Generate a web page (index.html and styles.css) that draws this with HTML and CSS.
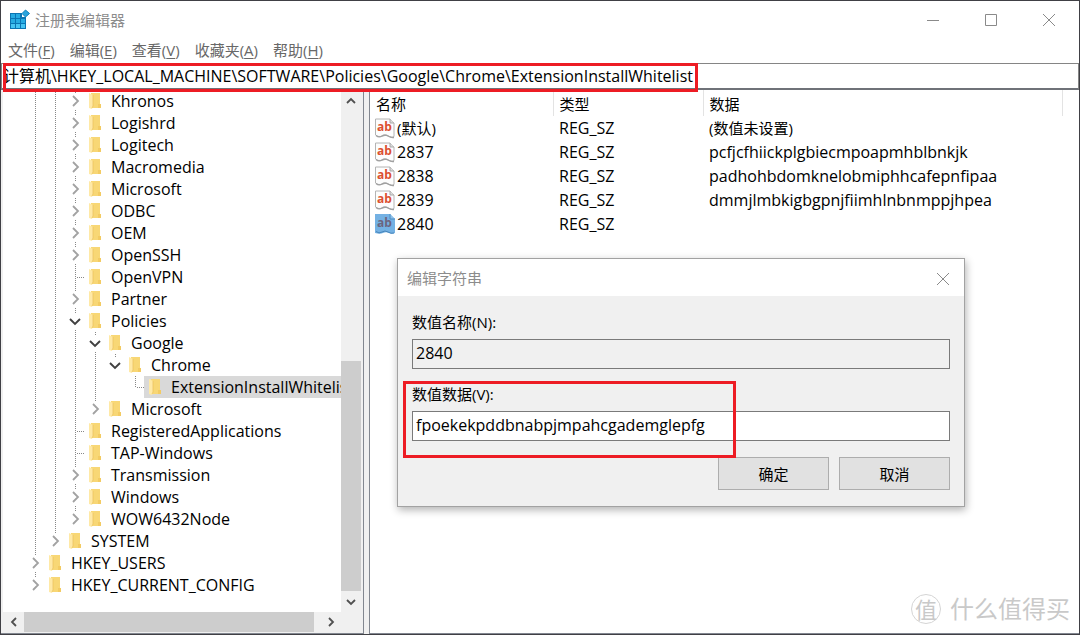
FILE: index.html
```
<!DOCTYPE html>
<html lang="zh-CN">
<head>
<meta charset="utf-8">
<title>注册表编辑器</title>
<link rel="stylesheet" href="styles.css">
</head>
<body>
<svg class="defs" aria-hidden="true">
  <symbol id="folder" viewBox="0 0 14 18">
    <path d="M3 1h9v12h1v3H3z" fill="#f8d775"/>
    <path d="M10 12h3v4h-3z" fill="#f3cb63"/>
    <path d="M1 1l4 2v11l-1 3-3-1z" fill="#ffe9a6"/>
    <path d="M5 3v11l-1 2" fill="none" stroke="#e9bf59" stroke-width=".7"/>
  </symbol>
  <symbol id="closed" viewBox="0 0 18 16"><path d="M7 3l5 5-5 5" fill="none" stroke="#a2a2a2" stroke-width="1.8"/></symbol>
  <symbol id="open" viewBox="0 0 18 16"><path d="M4 6l5 5 5-5" fill="none" stroke="#404040" stroke-width="1.9"/></symbol>
  <symbol id="leaf" viewBox="0 0 18 16"><path d="M11 8.500h8" fill="none" stroke="#888" stroke-dasharray="1 1"/></symbol>
  <symbol id="arrow" viewBox="0 0 10 10"><path d="M1 7l4-4 4 4" fill="none" stroke="#505050" stroke-width="1.800"/></symbol>
  <symbol id="string" viewBox="0 0 20 21">
    <path d="M.5 1h14.500l4 4v13.500q-2 1.500-4.500 0t-4.500-1-4.500 1T.5 17z" fill="#fdfdfd" stroke="#b4b4b4"/>
    <path d="M15 1v4h4" fill="#ddd" stroke="#a8a8a8"/>
    <path d="M1 17.500q3 2.500 6 .5t6 0q3 2 6 1.500" fill="none" stroke="#a0a0a0" stroke-width="1.300"/>
  </symbol>
</svg>
<div class="window">
  <header class="titlebar">
    <svg class="app-icon" width="22" height="22" viewBox="0 0 22 22">
      <path d="M1 4h12v4h4v12H1z" fill="#0b75b3"/>
      <path d="M2 5h4v4H2zM7 5h4v4H7zM2 10h4v4H2zM7 10h4v4H7zM12 10h4v4h-4z" fill="#27abe2"/>
      <path d="M2 15h4v4H2zM7 15h4v4H7zM12 15h4v4h-4z" fill="#45c4f2"/>
      <path d="M16.500 1l4 3.500-4 3.500-3.500-3.500z" fill="#2aa4dc" stroke="#0e80bd"/>
    </svg>
    <h1 class="title">注册表编辑器</h1>
    <div class="controls">
      <button class="control" aria-label="最小化"><svg width="14" height="14"><path d="M1 7.500h12"/></svg></button>
      <button class="control" aria-label="最大化"><svg width="14" height="14"><path d="M1.500 1.500h11v11h-11z"/></svg></button>
      <button class="control" aria-label="关闭"><svg width="14" height="14"><path d="M1 1l12 12M13 1L1 13"/></svg></button>
    </div>
  </header>
  <nav class="menu">
    <button>文件(<u>F</u>)</button><button>编辑(<u>E</u>)</button><button>查看(<u>V</u>)</button><button>收藏夹(<u>A</u>)</button><button>帮助(<u>H</u>)</button>
  </nav>
  <div class="address">
    <input class="address-input" aria-label="地址" value="计算机\HKEY_LOCAL_MACHINE\SOFTWARE\Policies\Google\Chrome\ExtensionInstallWhitelist">
    <div class="mark mark-address"></div>
  </div>
  <main class="main">
    <section class="tree-pane">
      <div class="tree-view">
        <ul class="tree root">
          <li><ul class="tree">
            <li><ul class="tree">
              <li><div class="row"><svg class="exp"><use href="#closed"/></svg><button class="key"><svg class="folder"><use href="#folder"/></svg>Khronos</button></div></li>
              <li><div class="row"><svg class="exp"><use href="#closed"/></svg><button class="key"><svg class="folder"><use href="#folder"/></svg>Logishrd</button></div></li>
              <li><div class="row"><svg class="exp"><use href="#closed"/></svg><button class="key"><svg class="folder"><use href="#folder"/></svg>Logitech</button></div></li>
              <li><div class="row"><svg class="exp"><use href="#closed"/></svg><button class="key"><svg class="folder"><use href="#folder"/></svg>Macromedia</button></div></li>
              <li><div class="row"><svg class="exp"><use href="#closed"/></svg><button class="key"><svg class="folder"><use href="#folder"/></svg>Microsoft</button></div></li>
              <li><div class="row"><svg class="exp"><use href="#closed"/></svg><button class="key"><svg class="folder"><use href="#folder"/></svg>ODBC</button></div></li>
              <li><div class="row"><svg class="exp"><use href="#closed"/></svg><button class="key"><svg class="folder"><use href="#folder"/></svg>OEM</button></div></li>
              <li><div class="row"><svg class="exp"><use href="#closed"/></svg><button class="key"><svg class="folder"><use href="#folder"/></svg>OpenSSH</button></div></li>
              <li><div class="row"><svg class="exp leaf"><use href="#leaf"/></svg><button class="key"><svg class="folder"><use href="#folder"/></svg>OpenVPN</button></div></li>
              <li><div class="row"><svg class="exp"><use href="#closed"/></svg><button class="key"><svg class="folder"><use href="#folder"/></svg>Partner</button></div></li>
              <li><div class="row"><svg class="exp"><use href="#open"/></svg><button class="key"><svg class="folder"><use href="#folder"/></svg>Policies</button></div>
                <ul class="tree">
                  <li><div class="row"><svg class="exp"><use href="#open"/></svg><button class="key"><svg class="folder"><use href="#folder"/></svg>Google</button></div>
                    <ul class="tree">
                      <li><div class="row"><svg class="exp"><use href="#open"/></svg><button class="key"><svg class="folder"><use href="#folder"/></svg>Chrome</button></div>
                        <ul class="tree">
                          <li><div class="row"><svg class="exp leaf"><use href="#leaf"/></svg><button class="key selected"><svg class="folder"><use href="#folder"/></svg>ExtensionInstallWhitelist</button></div></li>
                        </ul>
                      </li>
                    </ul>
                  </li>
                  <li><div class="row"><svg class="exp"><use href="#closed"/></svg><button class="key"><svg class="folder"><use href="#folder"/></svg>Microsoft</button></div></li>
                </ul>
              </li>
              <li><div class="row"><svg class="exp leaf"><use href="#leaf"/></svg><button class="key"><svg class="folder"><use href="#folder"/></svg>RegisteredApplications</button></div></li>
              <li><div class="row"><svg class="exp leaf"><use href="#leaf"/></svg><button class="key"><svg class="folder"><use href="#folder"/></svg>TAP-Windows</button></div></li>
              <li><div class="row"><svg class="exp"><use href="#closed"/></svg><button class="key"><svg class="folder"><use href="#folder"/></svg>Transmission</button></div></li>
              <li><div class="row"><svg class="exp"><use href="#closed"/></svg><button class="key"><svg class="folder"><use href="#folder"/></svg>Windows</button></div></li>
              <li><div class="row"><svg class="exp"><use href="#closed"/></svg><button class="key"><svg class="folder"><use href="#folder"/></svg>WOW6432Node</button></div></li>
            </ul></li>
            <li><div class="row"><svg class="exp"><use href="#closed"/></svg><button class="key"><svg class="folder"><use href="#folder"/></svg>SYSTEM</button></div></li>
          </ul></li>
          <li><div class="row"><svg class="exp"><use href="#closed"/></svg><button class="key"><svg class="folder"><use href="#folder"/></svg>HKEY_USERS</button></div></li>
          <li><div class="row"><svg class="exp"><use href="#closed"/></svg><button class="key"><svg class="folder"><use href="#folder"/></svg>HKEY_CURRENT_CONFIG</button></div></li>
        </ul>
      </div>
      <div class="scroll vertical">
        <button class="arrow" aria-label="向上"><svg><use href="#arrow"/></svg></button>
        <div class="track"><div class="thumb"></div></div>
        <button class="arrow down" aria-label="向下"><svg><use href="#arrow"/></svg></button>
      </div>
      <div class="scroll horizontal">
        <button class="arrow left" aria-label="向左"><svg><use href="#arrow"/></svg></button>
        <div class="track"><div class="thumb"></div></div>
        <button class="arrow right" aria-label="向右"><svg><use href="#arrow"/></svg></button>
      </div>
    </section>
    <section class="values">
      <table class="value-table">
        <colgroup><col class="col-name"><col class="col-type"><col class="col-data"><col></colgroup>
        <thead><tr><th>名称</th><th>类型</th><th>数据</th><td></td></tr></thead>
        <tbody>
          <tr><td class="local"><span class="name"><svg><use href="#string"/><text class="glyph" x="2" y="12.500">ab</text></svg>(默认)</span></td><td>REG_SZ</td><td class="local">(数值未设置)</td></tr>
          <tr><td><span class="name"><svg><use href="#string"/><text class="glyph" x="2" y="12.500">ab</text></svg>2837</span></td><td>REG_SZ</td><td>pcfjcfhiickplgbiecmpoapmhblbnkjk</td></tr>
          <tr><td><span class="name"><svg><use href="#string"/><text class="glyph" x="2" y="12.500">ab</text></svg>2838</span></td><td>REG_SZ</td><td>padhohbdomknelobmiphhcafepnfipaa</td></tr>
          <tr><td><span class="name"><svg><use href="#string"/><text class="glyph" x="2" y="12.500">ab</text></svg>2839</span></td><td>REG_SZ</td><td>dmmjlmbkigbgpnjfiimhlnbnmppjhpea</td></tr>
          <tr><td><span class="name"><svg viewBox="0 0 20 21"><path d="M0 0h15l5 5v14q-3 1.500-6 0t-6 0-8 0z" fill="#74b1e3"/><path d="M15 0v5h5" fill="#8fc2ea" stroke="#4c8dc4"/><path d="M1 17.500q3 2.500 6 .5t6 0q3 2 6 1" fill="none" stroke="#4785bb"/><text class="glyph picked" x="2" y="12.500">ab</text></svg>2840</span></td><td>REG_SZ</td><td></td></tr>
        </tbody>
      </table>
    </section>
  </main>
  <div class="watermark"><span class="seal">值</span><span>什么值得买</span></div>
  <form class="dialog" role="dialog" aria-labelledby="dialog-title">
    <header class="dialog-head">
      <h2 class="title" id="dialog-title">编辑字符串</h2>
      <button type="button" class="dialog-close" aria-label="关闭"><svg width="14" height="14"><path d="M1 1l12 12M13 1L1 13"/></svg></button>
    </header>
    <div class="dialog-body">
      <label for="value-name">数值名称(N):</label>
      <input id="value-name" class="field" value="2840" readonly>
      <label for="value-data">数值数据(V):</label>
      <input id="value-data" class="field editable" value="fpoekekpddbnabpjmpahcgademglepfg">
      <div class="actions"><button type="button" class="action">确定</button><button type="button" class="action">取消</button></div>
    </div>
    <div class="mark mark-data"></div>
  </form>
</div>
</body>
</html>
```
FILE: styles.css
```
* { box-sizing: border-box; }
body {
  margin: 0;
  color: #000;
  font: 15px/22px "Open Sans", "Noto Sans CJK SC", sans-serif;
}
button, input { font: inherit; color: inherit; }
button { border: 0; padding: 0; background: none; }
.defs { position: absolute; width: 0; height: 0; }
.window {
  position: relative;
  display: flex;
  flex-direction: column;
  height: 100vh;
  border: 1px solid #404045;
  background: #fff;
}
.title { flex: 1; margin: 0; color: #8c8c8c; font-size: 15px; font-weight: 400; }
.titlebar { display: flex; align-items: center; height: 37px; padding-left: 8px; }
.app-icon { margin-right: 4px; }
.controls { display: flex; align-self: flex-start; padding-right: 1px; }
.control { width: 58px; height: 34px; }
.control svg, .dialog-close svg { fill: none; stroke: #8a8a8a; vertical-align: middle; }
.menu { display: flex; gap: 15px; height: 25px; padding-left: 7px; color: #686868; }
.menu button { height: 24px; }
.menu u { text-underline-offset: 2px; }
.address { position: relative; height: 27px; border: 1px solid #858585; border-bottom: 2px solid #6f7278; }
.address-input { display: block; width: 100%; height: 24px; border: 0; padding: 0 1px 2px; outline: 0; background: none; font-size: 16px; }
.mark { position: absolute; border: 3px solid #ed1c24; pointer-events: none; }
.mark-address { left: 1px; top: -1px; width: 695px; height: 29px; }
.main { display: flex; flex: 1; min-height: 0; background: #f0f0f0; }

.tree-pane {
  display: grid;
  grid-template: minmax(0, 1fr) 20px / minmax(0, 1fr) 21px;
  flex: 0 0 363px;
  border-right: 1px solid #828790;
  border-bottom: 1px solid #828790;
  padding: 0 1px 1px 2px;
}
.tree-view { overflow: hidden; background: #fff; font-size: 16px; }
.tree { margin: 0; padding: 0 0 0 20px; list-style: none; }
.tree.root { padding-left: 23px; }
.tree li { background: repeating-linear-gradient(#888 0 1px, transparent 1px 2px) 9px 0 / 1px 100% no-repeat; }
.tree li:last-child { background-size: 1px 11px; }
.row { display: flex; align-items: center; height: 22px; }
.exp { flex: none; width: 18px; height: 16px; background: #fff; }
.exp.leaf { background: none; }
.key { display: flex; align-items: center; gap: 9px; height: 22px; padding-left: 4px; white-space: nowrap; }
.selected { background: #d9d9d9; }
.folder { flex: none; width: 14px; height: 18px; }
.scroll { display: flex; background: #f0f0f0; }
.vertical { flex-direction: column; padding-right: 1px; }
.track { display: flex; flex: 1; min-width: 0; min-height: 0; }
.thumb { flex: 1; background: #cdcdcd; }
.vertical .thumb { align-self: flex-end; height: 48%; }
.horizontal .thumb { flex: 0 0 98%; }
.arrow { display: grid; place-items: center; flex: 0 0 21px; }
.arrow svg { width: 10px; height: 10px; }
.down svg { transform: rotate(180deg); }
.left svg { transform: rotate(-90deg); }
.right svg { transform: rotate(90deg); }

.values { flex: 1; min-width: 0; margin-left: 5px; border-left: 1px solid #828790; border-bottom: 1px solid #828790; background: #fff; }
.value-table { width: 100%; table-layout: fixed; border-collapse: collapse; }
.col-name { width: 183px; }
.col-type { width: 150px; }
.col-data { width: 359px; }
.value-table th { height: 26px; border-right: 1px solid #e3e3e3; padding: 2px 6px 0; font-weight: 400; text-align: left; }
.value-table tbody td { height: 24px; padding: 0 6px; font-size: 16px; white-space: nowrap; }
.value-table tbody .local { font-size: 15px; }
.value-table tbody td:first-child { padding-left: 5px; }
.name { display: flex; align-items: center; gap: 2px; }
.name svg { width: 20px; height: 21px; }
.glyph { fill: #dc5030; font: 700 12px "Open Sans", sans-serif; }
.picked { fill: #6c6480; }

.dialog {
  position: absolute;
  left: 396px;
  top: 257px;
  width: 568px;
  border: 1px solid #a2a2a2;
  background: #f0f0f0;
  box-shadow: 1px 3px 8px rgba(0, 0, 0, .3);
}
.dialog-head { display: flex; align-items: center; height: 37px; padding-left: 9px; background: #fff; }
.dialog-close { width: 42px; height: 36px; }
.dialog-body { display: flex; flex-direction: column; padding: 15px 14px 16px; }
.dialog-body label { height: 28px; }
.field { height: 30px; border: 1px solid #7a7a7a; margin-bottom: 14px; padding: 0 3px 3px; outline: 0; background: none; font-size: 16px; }
.editable { margin-bottom: 16px; background: #fff; }
.actions { display: flex; justify-content: flex-end; gap: 10px; }
.action { width: 111px; height: 33px; border: 1px solid #adadad; background: #e1e1e1; }
.mark-data { left: 5px; top: 122px; width: 333px; height: 77px; }

.watermark { position: absolute; right: 9px; bottom: 9px; display: flex; align-items: center; gap: 9px; color: #c9c9c9; font-size: 24px; line-height: 32px; }
.seal { display: grid; place-items: center; width: 30px; height: 30px; border: 1px solid #d5d5d5; border-radius: 50%; font-size: 22px; line-height: 26px; }
```
